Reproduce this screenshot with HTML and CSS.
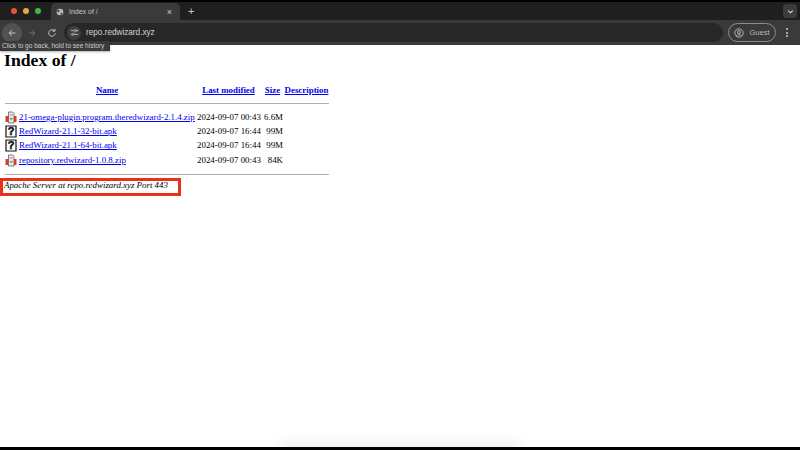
FILE: index.html
```html
<!DOCTYPE html>
<html lang="en">
<head>
<meta charset="utf-8">
<title>Index of /</title>
<link rel="stylesheet" href="styles.css">
</head>
<body>
<div class="screen">
  <header class="browser">
    <div class="tabstrip">
      <div class="lights"><span class="light red"></span><span class="light yellow"></span><span class="light green"></span></div>
      <div class="tab">
        <svg class="globe" viewBox="0 0 12 12"><circle cx="6" cy="6" r="5" fill="#b8b8b8"/><path d="M3 2.500l2.500 1L5 5.500 2.800 6 1.500 4.500zM7 7l2.500.2-.8 2.600-1.700.6z" fill="#3c3c3c"/></svg>
        <span class="tab-title">Index of /</span>
        <span class="tab-close">×</span>
      </div>
      <span class="new-tab">+</span>
      <span class="tab-menu"><svg viewBox="0 0 8 8" width="7" height="7"><path d="M1.500 3l2.500 2.500L6.500 3" fill="none" stroke="#ddd" stroke-width="1.300"/></svg></span>
    </div>
    <div class="toolbar">
      <span class="nav nav-active"><svg viewBox="0 0 12 12" width="10" height="10"><path d="M10 6H2.500M6 2.500L2.500 6 6 9.500" fill="none" stroke="#c8c8c8" stroke-width="1.200"/></svg></span>
      <span class="nav"><svg viewBox="0 0 12 12" width="10" height="10"><path d="M2 6h7.500M6 2.500L9.500 6 6 9.500" fill="none" stroke="#6e6e6e" stroke-width="1.200"/></svg></span>
      <span class="nav"><svg viewBox="0 0 12 12" width="10" height="10"><path d="M9.800 6.500A3.900 3.900 0 1 1 8.700 3.200M9.500 1v2.800H6.700" fill="none" stroke="#c8c8c8" stroke-width="1.200"/></svg></span>
      <div class="omnibox">
        <span class="site-info"><svg viewBox="0 0 12 12" width="9" height="9"><path d="M1 3.500h5M9 3.500h2M1 8.500h2M6 8.500h5" stroke="#d0d0d0" stroke-width="1.100"/><circle cx="7.500" cy="3.500" r="1.400" fill="none" stroke="#d0d0d0"/><circle cx="4.500" cy="8.500" r="1.400" fill="none" stroke="#d0d0d0"/></svg></span>
        <span class="url">repo.redwizard.xyz</span>
      </div>
      <div class="guest">
        <svg viewBox="0 0 12 12" width="10" height="10"><circle cx="6" cy="6" r="5" fill="none" stroke="#c8c8c8"/><circle cx="6" cy="4.800" r="1.800" fill="none" stroke="#c8c8c8"/><path d="M2.800 9.500C4 7.500 8 7.500 9.200 9.500" fill="none" stroke="#c8c8c8"/></svg>
        <span>Guest</span>
      </div>
      <span class="kebab"><i></i><i></i><i></i></span>
    </div>
    <div class="tooltip">Click to go back, hold to see history</div>
  </header>
  <main class="page">
    <h1 class="heading">Index of /</h1>
    <table class="listing">
      <tr class="head">
        <th class="col-icon"></th>
        <th class="col-name"><a href="#">Name</a></th>
        <th class="col-date"><a href="#">Last modified</a></th>
        <th class="col-size"><a href="#">Size</a></th>
        <th class="col-desc"><a href="#">Description</a></th>
      </tr>
      <tr><th colspan="5" class="rule-cell"><hr class="rule"></th></tr>
      <tr>
        <td class="col-icon"><svg class="file-icon" viewBox="0 0 12 13"><path d="M3.500 1h4.200L9 2.500V12H3.500z" fill="#e8e8e8" stroke="#5e5e5e" stroke-width=".8"/><path d="M4.800 3.500h2.800v1H4.800zM4.800 7h2.800v1.500H4.800z" fill="#8a8a8a"/><path d="M.5 5h3v6h-3zM9 5h2.500v6H9z" fill="#d2402a"/></svg></td>
        <td class="col-name"><a href="#">21-omega-plugin.program.theredwizard-2.1.4.zip</a></td>
        <td class="col-date">2024-09-07 00:43</td>
        <td class="col-size">6.6M</td>
        <td class="col-desc"></td>
      </tr>
      <tr>
        <td class="col-icon"><svg class="file-icon" viewBox="0 0 12 13"><path d="M1 1h10v11H1z" fill="#fff" stroke="#111" stroke-width="1.200"/><text x="6" y="10" class="q">?</text></svg></td>
        <td class="col-name"><a href="#">RedWizard-21.1-32-bit.apk</a></td>
        <td class="col-date">2024-09-07 16:44</td>
        <td class="col-size">99M</td>
        <td class="col-desc"></td>
      </tr>
      <tr>
        <td class="col-icon"><svg class="file-icon" viewBox="0 0 12 13"><path d="M1 1h10v11H1z" fill="#fff" stroke="#111" stroke-width="1.200"/><text x="6" y="10" class="q">?</text></svg></td>
        <td class="col-name"><a href="#">RedWizard-21.1-64-bit.apk</a></td>
        <td class="col-date">2024-09-07 16:44</td>
        <td class="col-size">99M</td>
        <td class="col-desc"></td>
      </tr>
      <tr>
        <td class="col-icon"><svg class="file-icon" viewBox="0 0 12 13"><path d="M3.500 1h4.200L9 2.500V12H3.500z" fill="#e8e8e8" stroke="#5e5e5e" stroke-width=".8"/><path d="M4.800 3.500h2.800v1H4.800zM4.800 7h2.800v1.500H4.800z" fill="#8a8a8a"/><path d="M.5 5h3v6h-3zM9 5h2.500v6H9z" fill="#d2402a"/></svg></td>
        <td class="col-name"><a href="#">repository.redwizard-1.0.8.zip</a></td>
        <td class="col-date">2024-09-07 00:43</td>
        <td class="col-size">84K</td>
        <td class="col-desc"></td>
      </tr>
      <tr><th colspan="5" class="rule-cell"><hr class="rule"></th></tr>
    </table>
    <address class="server">Apache Server at repo.redwizard.xyz Port 443</address>
  </main>
  <div class="dock-shadow"></div>
  <div class="bottom-bar"></div>
</div>
</body>
</html>
```
FILE: styles.css
```css
* { box-sizing: border-box; }
html, body { margin: 0; height: 100%; }
body { background: #fff; overflow: hidden; }

.screen {
  width: 800px;
  height: 450px;
  display: flex;
  flex-direction: column;
  position: relative;
  overflow: hidden;
}

.browser {
  height: 45px;
  flex: none;
  position: relative;
  font-family: "Liberation Sans", Arial, sans-serif;
  color: #c8c8c8;
  background: #000;
  padding-top: 2px;
}

.tabstrip {
  height: 18px;
  background: #1f1f1f;
  display: flex;
  align-items: center;
  padding-left: 11px;
}
.lights { display: flex; gap: 6px; width: 40px; }
.light { width: 6px; height: 6px; border-radius: 50%; }
.red { background: #e5533e; }
.yellow { background: #e6a93a; }
.green { background: #3fb950; }

.tab {
  width: 129px;
  height: 17px;
  margin-top: 1px;
  background: #3a3a3a;
  border-radius: 5px 5px 0 0;
  display: flex;
  align-items: center;
  padding: 0 8px 0 5px;
  gap: 5px;
  font-size: 7px;
}
.globe { width: 8px; height: 8px; flex: none; }
.tab-title { flex: 1; color: #c4c4c4; }
.tab-close { font-size: 9px; color: #d0d0d0; }
.new-tab { margin-left: 8px; font-size: 11px; color: #c8c8c8; }
.tab-menu {
  margin-left: auto;
  margin-right: 3px;
  width: 14px;
  height: 14px;
  border-radius: 4px;
  background: #3c3c3c;
  display: flex;
  align-items: center;
  justify-content: center;
}

.toolbar {
  height: 25px;
  background: #3a3a3a;
  display: flex;
  align-items: center;
  padding-left: 2px;
}
.nav {
  width: 20px;
  height: 20px;
  border-radius: 50%;
  display: flex;
  align-items: center;
  justify-content: center;
}
.nav-active { background: #525252; }
.omnibox {
  width: 659px;
  height: 19px;
  margin-left: 2px;
  border-radius: 10px;
  background: #272727;
  display: flex;
  align-items: center;
  padding-left: 3px;
  gap: 5px;
  font-size: 8.200px;
  color: #d2d2d2;
}
.site-info {
  width: 14px;
  height: 14px;
  border-radius: 50%;
  background: #3f3f3f;
  display: flex;
  align-items: center;
  justify-content: center;
}
.guest {
  margin-left: 5px;
  width: 48px;
  height: 19px;
  border: 1px solid #8a8a8a;
  border-radius: 10px;
  display: flex;
  align-items: center;
  justify-content: center;
  gap: 5px;
  font-size: 7.500px;
  color: #b8b8b8;
}
.kebab {
  margin-left: 10px;
  display: flex;
  flex-direction: column;
  gap: 1.500px;
}
.kebab i { width: 2px; height: 2px; border-radius: 50%; background: #c8c8c8; }

.tooltip {
  position: absolute;
  left: 0;
  top: 41px;
  width: 110px;
  height: 10px;
  background: #3a3a3a;
  color: #cfcfcf;
  font-size: 6.500px;
  line-height: 10px;
  padding-left: 2px;
  white-space: nowrap;
  box-shadow: 0 1px 2px rgba(0, 0, 0, .3);
}

.page {
  flex: 1;
  font-family: "Liberation Serif", "Times New Roman", serif;
  font-size: 8.900px;
  color: #000;
  padding-top: 4px;
}
.heading {
  font-size: 17.700px;
  line-height: 22px;
  margin: 0 0 12.500px 4px;
  font-weight: bold;
}
.listing {
  border-collapse: separate;
  border-spacing: 1px;
  margin-left: 4px;
  line-height: 11px;
  table-layout: fixed;
  width: 325px;
}
.listing a { color: #0000ee; }
.listing td, .listing th { padding: 0; white-space: nowrap; }
.head th { height: 12px; }
.col-icon { width: 13px; }
.listing tr:not(.head) td { height: 13.400px; vertical-align: middle; }
.col-name { width: 176px; }
.col-date { width: 65px; }
td.col-date { padding-left: 1px; }
.col-size { width: 21px; text-align: right; }
.head .col-size { text-align: center; }
.col-desc { width: 45px; }
.rule-cell { height: 12px; }
.rule {
  margin: 0;
  border: 0;
  border-top: 1px solid #b0b0b0;
}
.file-icon { display: block; width: 12px; height: 13px; }
.q { font-family: "Liberation Sans", sans-serif; font-size: 11px; font-weight: 700; text-anchor: middle; fill: #111; stroke: #111; stroke-width: .5; }

.server {
  width: 181px;
  height: 18px;
  margin-top: -3px;
  border: 3px solid #e8301c;
  font-style: italic;
  line-height: 9px;
  padding-left: 1px;
  white-space: nowrap;
}

.dock-shadow {
  position: absolute;
  left: 280px;
  right: 280px;
  bottom: 3px;
  height: 6px;
  background: rgba(0, 0, 0, .07);
  filter: blur(4px);
}
.bottom-bar {
  height: 3px;
  flex: none;
  background: #000;
  position: relative;
}
```
